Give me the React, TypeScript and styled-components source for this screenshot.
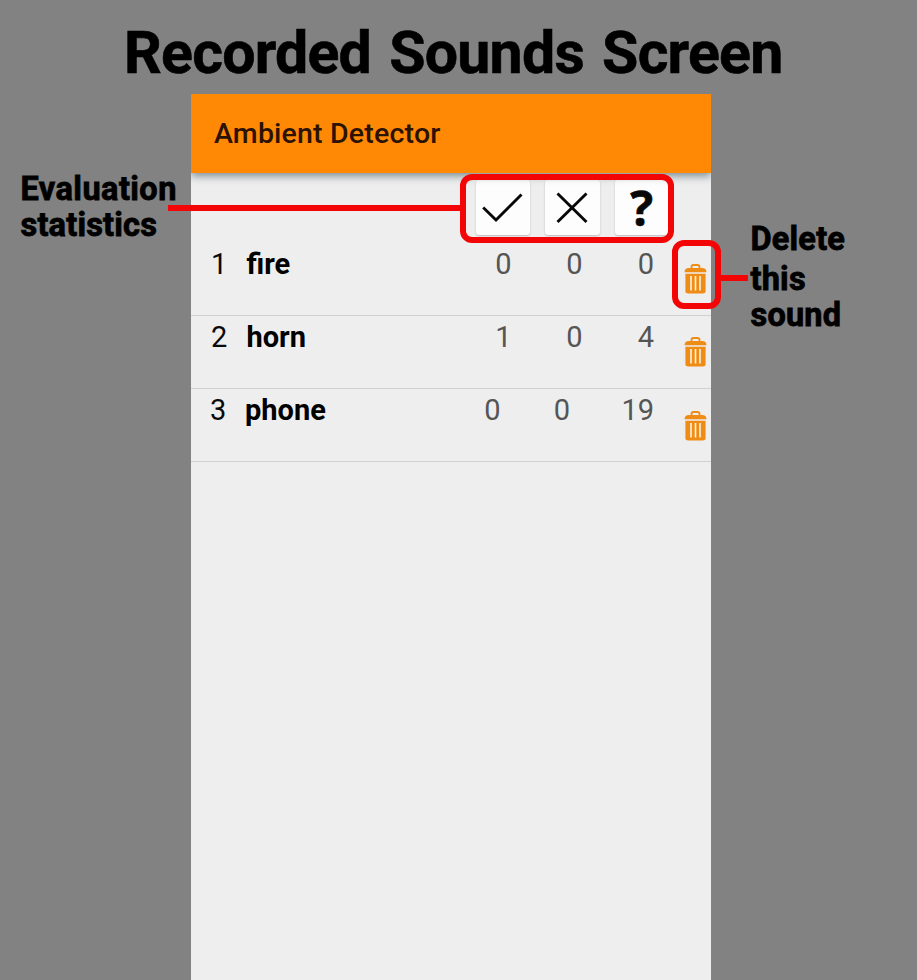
import React from "react";
import styled, { createGlobalStyle } from "styled-components";

const GlobalStyle = createGlobalStyle`
  * { box-sizing: border-box; }
  body {
    margin: 0;
    background: #828282;
    font-family: Roboto, sans-serif;
    overflow: hidden;
  }
`;

const Page = styled.main`
  position: relative;
  width: 917px;
  height: 980px;
  display: flex;
  flex-direction: column;
  background: #828282;
  overflow: hidden;
`;

const Title = styled.h1`
  margin: 0;
  height: 94px;
  padding: 18px 0 0 124px;
  font-size: 59px;
  line-height: 70px;
  font-weight: 700;
  letter-spacing: -0.75px;
  word-spacing: 4.2px;
  color: #000;
  white-space: nowrap;
  -webkit-text-stroke: 0.6px #000;
`;

const Columns = styled.div`
  flex: 1;
  display: grid;
  grid-template-columns: 191px 520px 1fr;
`;

const Phone = styled.section`
  background: #eee;
`;

const AppBar = styled.header`
  position: relative;
  height: 79px;
  padding-left: 23px;
  display: flex;
  align-items: center;
  background: #ff8904;
  box-shadow: 0 3px 8px rgba(50, 75, 85, 0.6);
  clip-path: inset(0 0 -14px 0);
  font-size: 28.5px;
  letter-spacing: 0.2px;
  font-weight: 500;
  color: #2b1203;
`;

const StatHeader = styled.div`
  height: 70px;
  padding: 7px 42px 0 0;
  display: flex;
  justify-content: flex-end;
  gap: 15px;
`;

const StatButton = styled.button`
  width: 54.5px;
  height: 55px;
  padding: 0;
  border: 0;
  border-radius: 3px;
  display: grid;
  place-items: center;
  background: #fdfdfd;
  box-shadow: 0 1px 2px rgba(0, 0, 0, 0.22);
  color: #080808;
`;

const QuestionMark = styled.span`
  font: 700 48px/55px "Open Sans", sans-serif;
  -webkit-text-stroke: 0.6px #080808;
`;

const SoundRow = styled.div`
  height: 73px;
  padding: 4px 0 0 19px;
  display: grid;
  grid-template-columns: 36px 1fr auto 57px;
  border-bottom: 1px solid #d0d0d0;
  font-size: 29px;
  line-height: 34px;
  color: #0a0a0a;
`;

const Index = styled.span<{ $shift: number }>`
  padding-left: ${(p) => p.$shift}px;
`;

const Name = styled.strong<{ $shift: number }>`
  font-weight: 700;
  font-size: 29px;
  margin-left: ${(p) => p.$shift}px;
  color: #000;
`;

const Counts = styled.div<{ $pitch: string }>`
  display: grid;
  grid-template-columns: ${(p) => p.$pitch};
  color: #555;
  text-align: right;
`;

const Trash = styled.button<{ $drop: number }>`
  width: 24px;
  height: 32px;
  margin: ${(p) => 16 + p.$drop}px 0 0 30px;
  padding: 0;
  border: 0;
  background: none;
  color: #ef8c16;
  line-height: 0;
`;

const Note = styled.p`
  margin: 0;
  font-size: 32.5px;
  line-height: 36px;
  font-weight: 700;
  letter-spacing: 0.2px;
  color: #000;
  -webkit-text-stroke: 0.8px #000;
`;

const LeftNote = styled(Note)`
  padding: 77px 0 0 20.5px;
`;

const RightNote = styled(Note)`
  padding: 127px 0 0 39.5px;
`;

const NoteLine = styled.span<{ $height?: number; $spacing?: number }>`
  display: block;
  height: ${(p) => p.$height ?? 36}px;
  letter-spacing: ${(p) => p.$spacing ?? 0.2}px;
  white-space: nowrap;
`;

const Callout = styled.div<{ $x: number; $y: number; $w: number; $h: number }>`
  position: absolute;
  left: ${(p) => p.$x}px;
  top: ${(p) => p.$y}px;
  width: ${(p) => p.$w}px;
  height: ${(p) => p.$h}px;
  border: 6px solid #f40505;
  border-radius: 12px;
  pointer-events: none;
`;

const Connector = styled.div<{ $x: number; $y: number; $w: number }>`
  position: absolute;
  left: ${(p) => p.$x}px;
  top: ${(p) => p.$y}px;
  width: ${(p) => p.$w}px;
  height: 6px;
  background: #f40505;
`;

const CheckIcon = () => (
  <svg width="54" height="55" viewBox="0 0 54 55" fill="none" stroke="currentColor" strokeWidth="2.9">
    <path d="M7.2 27.5 L20 40 L45.5 14.5" />
  </svg>
);

const CrossIcon = () => (
  <svg width="54" height="55" viewBox="0 0 54 55" fill="none" stroke="currentColor" strokeWidth="2.9">
    <path d="M12.5 13.5 L41.5 42 M41.5 13.5 L12.5 42" />
  </svg>
);

const TrashIcon = () => (
  <svg width="24" height="32" viewBox="0 0 24 32">
    <path
      d="M7.5 5.5 V3.8 Q7.5 2 9.5 2 H13.5 Q15.5 2 15.5 3.8 V5.5"
      fill="none"
      stroke="currentColor"
      strokeWidth="1.8"
    />
    <path d="M0.5 9.3 Q0.5 5 5 5 H18 Q22.5 5 22.5 9.3 Z" fill="currentColor" />
    <path d="M1.4 10.8 H21.6 V28 Q21.6 30.5 18.6 30.5 H4.4 Q1.4 30.5 1.4 28 Z" fill="currentColor" />
    <path d="M7 13 V27.5 M11.5 13 V27.5 M16 13 V27.5" stroke="#fff3dc" strokeWidth="1.6" />
  </svg>
);

const sounds = [
  { name: "fire", counts: [0, 0, 0], indent: 1, nameIndent: 0.5, pitch: "20px 71px 71.5px", drop: 0 },
  { name: "horn", counts: [1, 0, 4], indent: 1, nameIndent: 0.5, pitch: "20px 71px 71.5px", drop: 0 },
  { name: "phone", counts: [0, 0, 19], indent: 0, nameIndent: -1, pitch: "20px 69.5px 84px", drop: 1 },
];

export default function App() {
  return (
    <>
      <GlobalStyle />
      <Page>
        <Title>Recorded Sounds Screen</Title>
        <Columns>
          <LeftNote>
            <NoteLine $spacing={0.45}>Evaluation</NoteLine>
            <NoteLine>statistics</NoteLine>
          </LeftNote>
          <Phone>
            <AppBar>Ambient Detector</AppBar>
            <StatHeader>
              <StatButton aria-label="Correct"><CheckIcon /></StatButton>
              <StatButton aria-label="Wrong"><CrossIcon /></StatButton>
              <StatButton><QuestionMark>?</QuestionMark></StatButton>
            </StatHeader>
            {sounds.map((s, i) => (
              <SoundRow key={s.name}>
                <Index $shift={s.indent}>{i + 1}</Index>
                <Name $shift={s.nameIndent}>{s.name}</Name>
                <Counts $pitch={s.pitch}>
                  {s.counts.map((c, k) => (
                    <span key={k}>{c}</span>
                  ))}
                </Counts>
                <Trash aria-label={`Delete ${s.name}`} $drop={s.drop}><TrashIcon /></Trash>
              </SoundRow>
            ))}
          </Phone>
          <RightNote>
            <NoteLine $height={40}>Delete</NoteLine>
            <NoteLine>this</NoteLine>
            <NoteLine>sound</NoteLine>
          </RightNote>
        </Columns>
        <Connector $x={168} $y={205} $w={296} />
        <Connector $x={716} $y={275} $w={32} />
        <Callout $x={460} $y={173.5} $w={214} $h={69.5} />
        <Callout $x={672} $y={240} $w={49} $h={69} />
      </Page>
    </>
  );
}
